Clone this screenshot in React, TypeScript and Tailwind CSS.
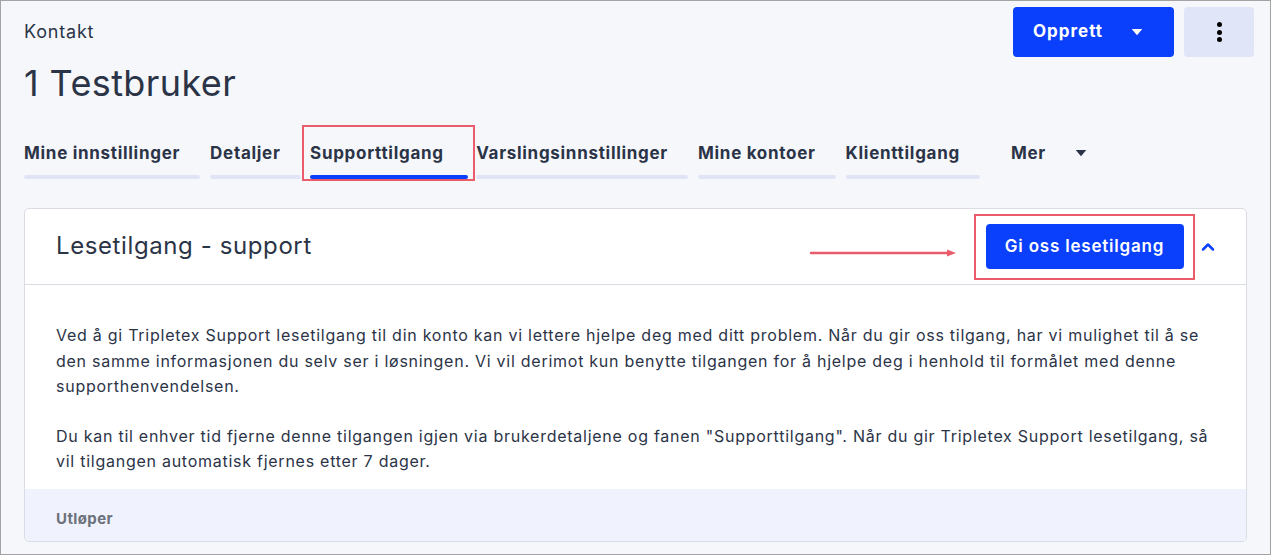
import { ChevronUp } from 'lucide-react';

const TABS = [
  { label: 'Mine innstillinger', active: false, boxed: false },
  { label: 'Detaljer', active: false, boxed: false },
  { label: 'Supporttilgang', active: true, boxed: true },
  { label: 'Varslingsinnstillinger', active: false, boxed: false },
  { label: 'Mine kontoer', active: false, boxed: false },
  { label: 'Klienttilgang', active: false, boxed: false },
];

function CaretDown({ className }: { className?: string }) {
  return (
    <svg viewBox="0 0 12 8" className={className} fill="currentColor">
      <path d="M0 0h12L6 7z" />
    </svg>
  );
}

export default function App() {
  return (
    <div
      className="w-[1271px] h-[555px] overflow-hidden bg-[#f6f7fb] border border-[#a3a3a3] text-[#2b3447]"
      style={{ fontFamily: 'Inter, "Noto Sans", sans-serif' }}
    >
      {/* Header */}
      <div className="flex justify-between pl-[23px] pr-[16px] pt-[6px]">
        <div>
          <div className="text-[18px] leading-[22px] tracking-[0.8px] mt-[14px]">Kontakt</div>
          <h1 className="text-[36px] leading-[40px] mt-[20px] tracking-[0.4px]">1 Testbruker</h1>
        </div>
        <div className="flex gap-[10px]">
          <button className="flex items-center w-[161px] h-[50px] rounded-[4px] bg-[#0a40fb] text-white font-bold text-[17px] tracking-[1px] pl-[20px]">
            Opprett
            <CaretDown className="w-[12px] h-[7px] ml-[28px]" />
          </button>
          <button className="flex items-center justify-center w-[70px] h-[50px] rounded-[4px] bg-[#e0e5f8]">
            <span className="flex flex-col gap-[2.5px]">
              <span className="w-[5px] h-[5px] rounded-full bg-black" />
              <span className="w-[5px] h-[5px] rounded-full bg-black" />
              <span className="w-[5px] h-[5px] rounded-full bg-black" />
            </span>
          </button>
        </div>
      </div>

      {/* Tabs */}
      <div className="flex items-start gap-[10px] pl-[23px] mt-[22px] h-[83px]">
        {TABS.map((t) => (
          <div
            key={t.label}
            className={
              t.boxed
                ? 'relative -ml-[9px] -mr-[9px] pl-[6.5px] pr-[5.5px] pt-[14.5px] pb-[0.5px] border-[2.5px] border-[#ea5b6b]'
                : 'pt-[17px]'
            }
          >
            <div
              className={
                t.boxed
                  ? 'pr-[24px] text-[17px] font-bold leading-[22px] tracking-[0.7px] whitespace-nowrap'
                  : 'pr-[20px] text-[17px] font-bold leading-[22px] tracking-[0.7px] whitespace-nowrap'
              }
            >
              {t.label}
            </div>
            <div
              className={
                t.active
                  ? 'mt-[11px] h-[4px] rounded-full bg-[#0a40fb]'
                  : 'mt-[11px] h-[4px] rounded-full bg-[#dfe4f6]'
              }
            />
          </div>
        ))}
        <div className="flex items-center pt-[17px] pl-[21px] text-[17px] font-bold leading-[22px] tracking-[0.7px]">
          Mer
          <CaretDown className="w-[12px] h-[7px] ml-[29px]" />
        </div>
      </div>

      {/* Card */}
      <div className="mx-[23px] rounded-[5px] border border-[#d9dce2] bg-white overflow-hidden">
        <div className="flex items-center justify-between h-[76px] pl-[31px] pr-[28px] border-b border-[#d9dce2]">
          <h2 className="text-[24px] leading-[30px] tracking-[0.6px] mt-[-2px]">Lesetilgang - support</h2>
          <div className="flex items-center">
            <svg width="150" height="10" viewBox="0 0 150 10" className="mr-[15px] mt-[13px]">
              <line x1="2" y1="5" x2="140" y2="5" stroke="#ea5b6b" strokeWidth="2.5" strokeLinecap="round" />
              <path d="M138 1.5L147 5L138 8.5z" fill="#ea5b6b" />
            </svg>
            <div className="border-[2.5px] border-[#ea5b6b] px-[9.5px] py-[8.5px]">
              <button className="block h-[45px] w-[198px] rounded-[4px] bg-[#0a40fb] text-white font-semibold text-[17px] tracking-[0.8px]">
                Gi oss lesetilgang
              </button>
            </div>
            <ChevronUp className="w-[20px] h-[20px] text-[#0a40fb] ml-[3px]" strokeWidth={3} />
          </div>
        </div>
        <div className="px-[31px] pt-[38px] pb-[14px] text-[16px] leading-[25.5px] tracking-[0.74px] text-[#2b3447]">
          <p>
            Ved å gi Tripletex Support lesetilgang til din konto kan vi lettere hjelpe deg med ditt problem. Når du gir oss tilgang, har vi mulighet til å se den samme informasjonen du selv ser i løsningen. Vi vil derimot kun benytte tilgangen for å hjelpe deg i henhold til formålet med denne supporthenvendelsen.
          </p>
          <p className="mt-[24px]">
            Du kan til enhver tid fjerne denne tilgangen igjen via brukerdetaljene og fanen "Supporttilgang". Når du gir Tripletex Support lesetilgang, så vil tilgangen automatisk fjernes etter 7 dager.
          </p>
        </div>
        <div className="bg-[#f0f3fe] h-[52px] pl-[31px] pt-[19px] text-[15px] font-bold tracking-[0.4px] text-[#6c717c]">
          Utløper
        </div>
      </div>
    </div>
  );
}
